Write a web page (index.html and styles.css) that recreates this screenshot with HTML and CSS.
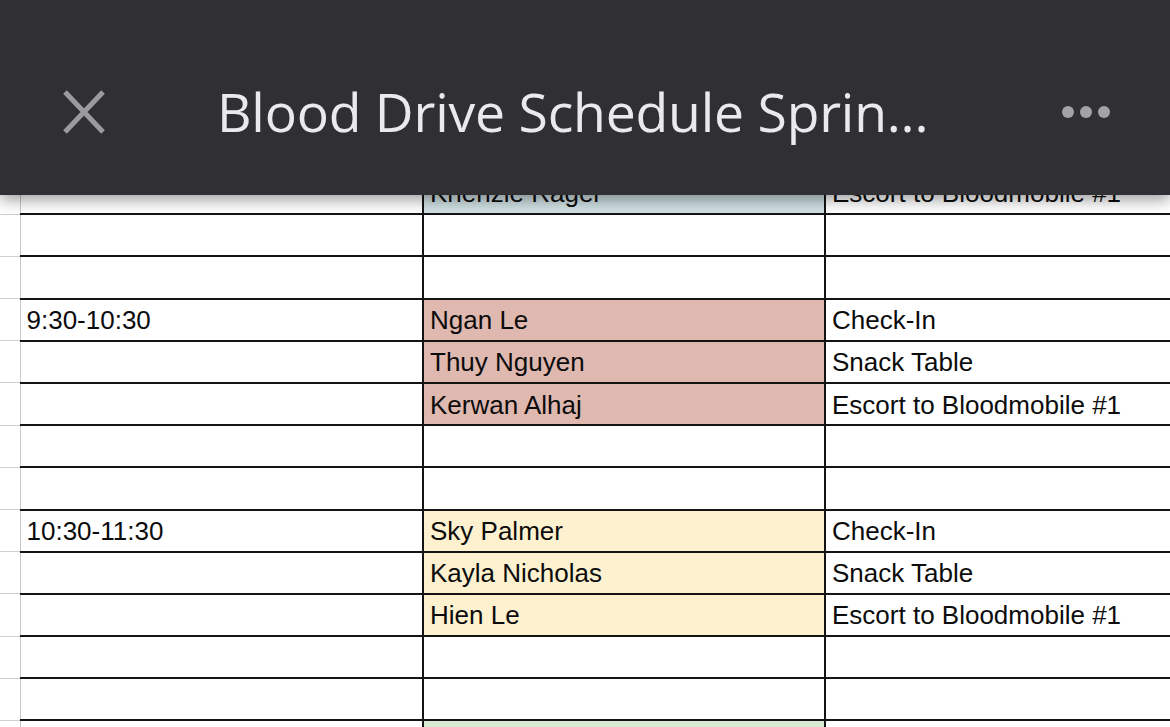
FILE: index.html
```html
<!DOCTYPE html>
<html>
<head>
<meta charset="utf-8">
<link rel="stylesheet" href="styles.css">
</head>
<body>
<header class="topbar">
  <button class="close-btn" aria-label="Close">
    <svg width="44" height="46" viewBox="0 0 44 46"><path d="M3 3 L41 43 M41 3 L3 43" stroke="#9b9b9f" stroke-width="5" stroke-linecap="butt" fill="none"/></svg>
  </button>
  <h1 class="title">Blood Drive Schedule Sprin...</h1>
  <div class="more" aria-label="More">
    <span class="dot"></span><span class="dot"></span><span class="dot"></span>
  </div>
</header>
<main class="sheet">
  <table class="grid">
    <colgroup><col class="c-rh"><col class="c-a"><col class="c-b"><col class="c-c"></colgroup>
    <tbody>
      <tr><td class="rh"></td><td></td><td class="blue">Khenzie Rager</td><td>Escort to Bloodmobile #1</td></tr>
      <tr><td class="rh"></td><td></td><td></td><td></td></tr>
      <tr><td class="rh"></td><td></td><td></td><td></td></tr>
      <tr><td class="rh"></td><td>9:30-10:30</td><td class="pink">Ngan Le</td><td>Check-In</td></tr>
      <tr><td class="rh"></td><td></td><td class="pink">Thuy Nguyen</td><td>Snack Table</td></tr>
      <tr><td class="rh"></td><td></td><td class="pink">Kerwan Alhaj</td><td>Escort to Bloodmobile #1</td></tr>
      <tr><td class="rh"></td><td></td><td></td><td></td></tr>
      <tr><td class="rh"></td><td></td><td></td><td></td></tr>
      <tr><td class="rh"></td><td>10:30-11:30</td><td class="yellow">Sky Palmer</td><td>Check-In</td></tr>
      <tr><td class="rh"></td><td></td><td class="yellow">Kayla Nicholas</td><td>Snack Table</td></tr>
      <tr><td class="rh"></td><td></td><td class="yellow">Hien Le</td><td>Escort to Bloodmobile #1</td></tr>
      <tr><td class="rh"></td><td></td><td></td><td></td></tr>
      <tr><td class="rh"></td><td></td><td></td><td></td></tr>
      <tr><td class="rh"></td><td></td><td class="green"></td><td></td></tr>
    </tbody>
  </table>
</main>
</body>
</html>
```
FILE: styles.css
```css
html, body {
  margin: 0;
  padding: 0;
  background: #ffffff;
  overflow: hidden;
  width: 1170px;
  height: 727px;
}

.topbar {
  position: relative;
  z-index: 2;
  height: 195px;
  box-sizing: border-box;
  padding-top: 28px;
  background: #303034;
  display: flex;
  align-items: center;
  box-shadow: 0 5px 14px rgba(0, 0, 0, 0.38);
}

.close-btn {
  margin-left: 62px;
  width: 44px;
  height: 46px;
  padding: 0;
  border: 0;
  background: transparent;
  display: flex;
}

.title {
  margin: 0 0 0 111px;
  font-family: "Open Sans", "Noto Sans", sans-serif;
  font-weight: 500;
  font-size: 53.5px;
  color: #e9e9ee;
  white-space: nowrap;
  letter-spacing: -0.2px;
  flex: 1;
}

.more {
  display: flex;
  gap: 6px;
  margin-right: 60px;
}

.dot {
  width: 12px;
  height: 12px;
  border-radius: 50%;
  background: #a3a3a7;
}

.sheet {
  margin-top: -23px;
  position: relative;
  z-index: 1;
}

.grid {
  border-collapse: collapse;
  table-layout: fixed;
  width: 1250px;
  font-family: "Liberation Sans", Arial, sans-serif;
  font-size: 26px;
  color: #0c0c0c;
}

.c-rh { width: 20px; }
.c-a { width: 403px; }
.c-b { width: 402px; }
.c-c { width: 425px; }

.grid td {
  height: 42.2px;
  box-sizing: border-box;
  padding: 1px 6px 0 6px;
  border: 2px solid #141414;
  border-left: 0;
  white-space: nowrap;
  overflow: hidden;
  vertical-align: middle;
  line-height: 26px;
}

.grid td.rh {
  padding: 0;
  border: 0;
  border-right: 1px solid #c8c8c8;
  border-bottom: 1px solid #d0d0d0;
  background: #ffffff;
}

.grid tr:first-child td { border-top: 0; }

.blue { background: #d0e0e3; }
.pink { background: #dfb8b0; }
.yellow { background: #fdf1cf; }
.green { background: #d9ead3; }
```
